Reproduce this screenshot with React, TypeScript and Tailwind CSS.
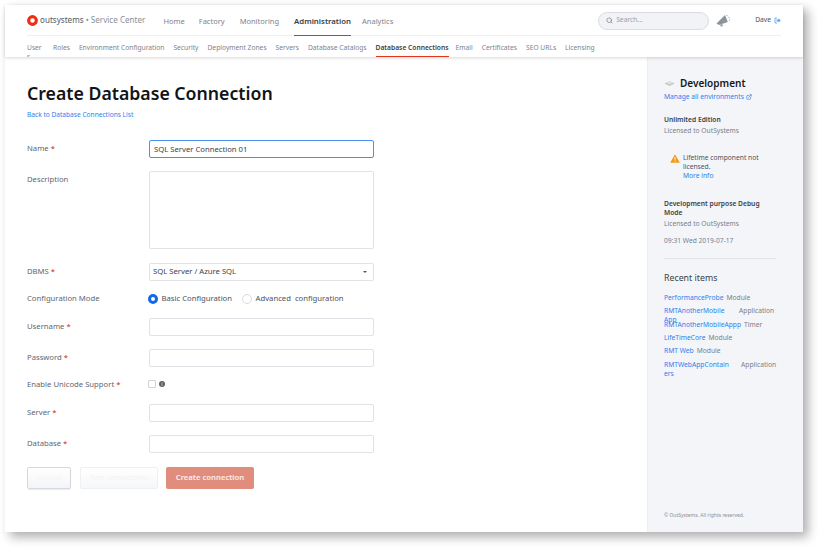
import React from 'react';
import { Search, ExternalLink } from 'lucide-react';

const topNav = [
  { label: 'Home', ml: 'ml-[18px]' },
  { label: 'Factory', ml: 'ml-[14px]' },
  { label: 'Monitoring', ml: 'ml-[15px]' },
  { label: 'Administration', ml: 'ml-[15px]', active: true },
  { label: 'Analytics', ml: 'ml-[11px]' },
];

const subNav = ['Roles', 'Environment Configuration', 'Security', 'Deployment Zones', 'Servers', 'Database Catalogs'];
const subNavEnd = ['Email', 'Certificates', 'SEO URLs', 'Licensing'];

function Req() {
  return <span className="text-[#d9503f] font-semibold"> *</span>;
}

function Field({ label, required, mt, tall, children }: { label: string; required?: boolean; mt: string; tall?: boolean; children?: React.ReactNode }) {
  return (
    <div className={`flex items-start ${mt}`}>
      <div className="w-[122px] h-[18px] leading-[17px] text-[7.7px] text-[#5f6670]">
        {label}
        {required && <Req />}
      </div>
      {children ?? <div className={`w-[225px] ${tall ? 'h-[78px]' : 'h-[18px]'} bg-white border border-[#dfe2e6] rounded-[2px]`} />}
    </div>
  );
}

function Radio({ checked }: { checked?: boolean }) {
  return checked ? (
    <span className="w-[10px] h-[10px] rounded-full border-[3px] border-[#1068eb] bg-white" />
  ) : (
    <span className="w-[10px] h-[10px] rounded-full border border-[#d8dbe0] bg-white" />
  );
}

function RecentItem({ name, type, nameClass, typeMl }: { name: string; type: string; nameClass?: string; typeMl?: string }) {
  return (
    <div className="flex items-start h-[13.3px] leading-[9px] text-[6.7px]">
      <span className={`text-[#2f80ed] shrink-0 ${nameClass ?? ''}`}>{name}</span>
      <span className={`text-[#7a8088] ${typeMl ?? 'ml-[3px]'}`}>{type}</span>
    </div>
  );
}

export default function App() {
  return (
    <div className="w-[818px] h-[547px] bg-white pt-[5px] pl-[5px] overflow-hidden" style={{ fontFamily: '"Noto Sans", "Open Sans", sans-serif' }}>
      <div className="w-[798px] h-[527px] flex flex-col bg-white shadow-[5px_5px_10px_rgba(0,0,0,0.32)]">
        {/* header */}
        <header className="h-[52px] shrink-0 px-[22px] shadow-[0_1px_3px_rgba(0,0,0,0.16)] relative z-10 overflow-hidden">
          <div className="h-[31px] pt-[1px] flex items-center border-b border-[#eceef1]">
            <svg width="11" height="11" viewBox="0 0 12 12" className="shrink-0">
              <circle cx="6" cy="6" r="4.2" fill="none" stroke="#ee2e12" strokeWidth="3.4" />
            </svg>
            <span className="ml-[2px] text-[8.1px] text-[#55595f]">outsystems</span>
            <span className="ml-[2px] text-[8.1px] text-[#8b9097]">• Service Center</span>
            {topNav.map((n) => (
              <span key={n.label} className={`${n.ml} h-[30px] leading-[30px] ${n.active ? 'text-[7.8px] font-semibold text-[#3a3f45] border-b border-[#e0341b]' : 'text-[7.5px] text-[#7d838b]'}`}>
                {n.label}
              </span>
            ))}
            <div className="ml-auto flex items-center w-[111px] h-[18px] rounded-full bg-[#f1f3f6] border border-[#d9dde2] pl-[7px]">
              <Search size={7} className="text-[#7d838b]" strokeWidth={2.5} />
              <span className="ml-[3px] text-[6.7px] text-[#9aa0a7]">Search...</span>
            </div>
            <svg width="15" height="13" viewBox="0 0 15 13" className="ml-[7px] shrink-0">
              <path d="M0.5 9.5 L9 1 L11.8 8 L3 11 Z" fill="#8d949c" />
              <path d="M3.5 10.5 L5 12.8 L7.2 12 L6.3 9.8 Z" fill="#a6abb2" />
              <circle cx="11" cy="1.5" r="0.7" fill="#b3b8be" />
              <circle cx="13" cy="3.5" r="0.7" fill="#b3b8be" />
              <circle cx="13.5" cy="6" r="0.7" fill="#b3b8be" />
            </svg>
            <span className="ml-[24px] text-[6.7px] text-[#4d5259]">Dave</span>
            <svg width="7" height="7" viewBox="0 0 7 7" className="ml-[3px] shrink-0">
              <path d="M3 1 H1 V6 H3" fill="none" stroke="#6da8ee" strokeWidth="0.9" />
              <path d="M2.5 2.6 H4.5 V1.2 L6.8 3.5 L4.5 5.8 V4.4 H2.5 Z" fill="#6da8ee" />
            </svg>
          </div>
          <nav className="h-[21px] flex items-start text-[6.7px] text-[#7d838b]">
            <span className="w-[17px] break-all leading-[9px] pt-[7px]">Users</span>
            {subNav.map((s) => (
              <span key={s} className="ml-[9px] h-[21px] leading-[23px] whitespace-nowrap">{s}</span>
            ))}
            <span className="ml-[9px] h-[21px] leading-[23px] font-semibold text-[#3a3f45] border-b border-[#e0341b] whitespace-nowrap">Database Connections</span>
            <span className="ml-[7px] h-[21px] leading-[23px]">{subNavEnd[0]}</span>
            {subNavEnd.slice(1).map((s) => (
              <span key={s} className="ml-[9px] h-[21px] leading-[23px] whitespace-nowrap">{s}</span>
            ))}
          </nav>
        </header>

        <div className="flex-1 flex min-h-0">
          {/* form */}
          <main className="flex-1 pl-[22px] pt-[23px]">
            <h1 className="text-[17.7px] leading-[26px] font-semibold text-[#111417]">Create Database Connection</h1>
            <a className="block mt-[4px] text-[6.6px] leading-[10px] text-[#2f80ed]">Back to Database Connections List</a>

            <Field label="Name" required mt="mt-[20px]">
              <div className="w-[225px] h-[18px] bg-white border border-[#4a90ee] rounded-[2px] pl-[4px] leading-[16px] text-[7.7px] text-[#3d4249]">SQL Server Connection 01</div>
            </Field>
            <Field label="Description" mt="mt-[13px]" tall />
            <Field label="DBMS" required mt="mt-[14px]">
              <div className="w-[225px] h-[18px] flex items-center justify-between bg-white border border-[#dfe2e6] rounded-[2px] pl-[3px] pr-[6px] text-[7.7px] text-[#3d4249]">
                SQL Server / Azure SQL
                <span className="w-0 h-0 border-x-[2px] border-x-transparent border-t-[2px] border-t-[#555b62]" />
              </div>
            </Field>
            <Field label="Configuration Mode" mt="mt-[9px]">
              <div className="h-[18px] flex items-center text-[7.7px] text-[#4d5259] -ml-[1px]">
                <Radio checked />
                <span className="ml-[3.5px]">Basic Configuration</span>
                <span className="ml-[9.5px] flex"><Radio /></span>
                <span className="ml-[4px] whitespace-pre">Advanced  configuration</span>
              </div>
            </Field>
            <Field label="Username" required mt="mt-[10px]" />
            <Field label="Password" required mt="mt-[13px]" />
            <Field label="Enable Unicode Support" required mt="mt-[9px]">
              <div className="h-[18px] flex items-center -ml-[1px] -mt-[1px]">
                <span className="w-[8px] h-[8px] rounded-[1px] border border-[#d0d4d9] bg-white" />
                <span className="ml-[3px] w-[6px] h-[6px] rounded-full bg-[#5c6269] text-white text-[5px] leading-[6px] text-center">i</span>
              </div>
            </Field>
            <Field label="Server" required mt="mt-[10px]" />
            <Field label="Database" required mt="mt-[13px]" />

            <div className="flex mt-[14px] text-[7.7px] font-semibold">
              <button className="w-[44px] h-[22px] rounded-[2px] border border-[#d5d9de] shadow-[0_1px_1px_rgba(0,0,0,0.08)] bg-gradient-to-b from-white to-[#f3f5f8] text-[#f5f6f8]">Cancel</button>
              <button className="ml-[9px] w-[78px] h-[22px] rounded-[2px] border border-[#eef0f3] bg-gradient-to-b from-white to-[#f6f7f9] text-[#f4f5f7]">Test connection</button>
              <button className="ml-[8px] w-[88px] h-[22px] rounded-[2px] bg-[#e08d7e] text-[#fbeeeb]">Create connection</button>
            </div>
          </main>

          {/* side panel */}
          <aside className="w-[156px] shrink-0 bg-[#f3f5f9] border-l border-[#eceef1] pl-[16px] pr-[27px] pt-[19px] flex flex-col text-[6.7px]">
            <div className="flex items-center h-[14px]">
              <svg width="11" height="7" viewBox="0 0 11 7">
                <path d="M0.5 3.5 L5.5 1 L10.5 3.5 L5.5 6 Z" fill="#c4c8c0" />
                <path d="M2 2.8 L5.5 1 L9 2.8 L5.5 4.4 Z" fill="#dfe2da" />
              </svg>
              <span className="ml-[5px] text-[10px] font-semibold text-[#15181b]">Development</span>
            </div>
            <div className="mt-[1px] flex items-center leading-[12px] text-[#2f80ed]">
              Manage all environments
              <ExternalLink size={6} className="ml-[2px]" strokeWidth={2.5} />
            </div>
            <div className="mt-[11px] leading-[11px] font-semibold text-[#3a3f45]">Unlimited Edition</div>
            <div className="leading-[11px] text-[#7a8088]">Licensed to OutSystems</div>

            <div className="mt-[17px] ml-[6px] flex items-start">
              <svg width="10" height="9" viewBox="0 0 10 9" className="mt-[1px] shrink-0">
                <path d="M5 0.3 L9.8 8.7 H0.2 Z" fill="#f09a1a" />
                <rect x="4.6" y="3" width="0.9" height="3" fill="#fff" />
                <rect x="4.6" y="6.6" width="0.9" height="1" fill="#fff" />
              </svg>
              <div className="ml-[3px] leading-[9.2px] text-[#4d5259]">
                Lifetime component not licensed.
                <div className="text-[#2f80ed]">More info</div>
              </div>
            </div>

            <div className="mt-[18px] leading-[9px] font-semibold text-[#3a3f45]">Development purpose Debug Mode</div>
            <div className="mt-[1px] leading-[11px] text-[#7a8088]">Licensed to OutSystems</div>
            <div className="mt-[6px] leading-[11px] text-[#7a8088]">09:31 Wed 2019-07-17</div>
            <div className="mt-[12px] border-t border-[#dfe2e7]" />
            <div className="mt-[13.5px] text-[8.8px] leading-[12px] text-[#3a3f45]">Recent items</div>

            <div className="mt-[9px]">
              <RecentItem name="PerformanceProbe" type="Module" />
              <RecentItem name="RMTAnotherMobile App" type="Application" nameClass="w-[62px]" typeMl="ml-[13px] whitespace-nowrap" />
              <RecentItem name="RMTAnotherMobileAppp" type="Timer" />
              <RecentItem name="LifeTimeCore" type="Module" />
              <RecentItem name="RMT Web" type="Module" />
              <RecentItem name="RMTWebAppContainers" type="Application" nameClass="w-[65px] break-all" typeMl="ml-[12px] whitespace-nowrap" />
            </div>

            <div className="mt-auto mb-[13px] text-[5px] leading-[7px] text-[#8a9098] whitespace-nowrap">© OutSystems. All rights reserved.</div>
          </aside>
        </div>
      </div>
    </div>
  );
}
